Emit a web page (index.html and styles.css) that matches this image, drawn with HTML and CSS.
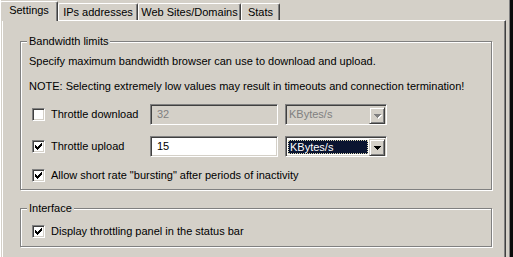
FILE: index.html
```html
<!DOCTYPE html>
<html>
<head>
<meta charset="utf-8">
<link rel="stylesheet" href="styles.css">
</head>
<body>
<div class="dialog">
  <div class="main">
    <div class="tabs">
      <div class="tab active tab-settings">Settings</div>
      <div class="tab tab-ips">IPs addresses</div>
      <div class="tab tab-web">Web Sites/Domains</div>
      <div class="tab tab-stats">Stats</div>
    </div>
    <div class="panel">
      <fieldset class="group">
        <legend>Bandwidth limits</legend>
        <div class="group-body group-body-bw">
          <p class="line">Specify maximum bandwidth browser can use to download and upload.</p>
          <p class="line line-note">NOTE: Selecting extremely low values may result in timeouts and connection termination!</p>
          <div class="row">
            <label class="check">
              <span class="box"></span>
              <span>Throttle download</span>
            </label>
            <div class="textbox disabled">32</div>
            <div class="select disabled">
              <div class="value">KBytes/s</div>
              <div class="drop"><svg width="7" height="4" viewBox="0 0 7 4" class="arrow-shadow"><path d="M0 0h7v1H0zM1 1h5v1H1zM2 2h3v1H2zM3 3h1v1H3z" fill="#fff"/></svg><svg width="7" height="4" viewBox="0 0 7 4" class="arrow"><path d="M0 0h7v1H0zM1 1h5v1H1zM2 2h3v1H2zM3 3h1v1H3z"/></svg></div>
            </div>
          </div>
          <div class="row">
            <label class="check">
              <span class="box"><svg width="7" height="7" viewBox="0 0 7 7"><path d="M0 2h1v3H0zM1 3h1v3H1zM2 4h1v3H2zM3 3h1v3H3zM4 2h1v3H4zM5 1h1v3H5zM6 0h1v3H6z"/></svg></span>
              <span>Throttle upload</span>
            </label>
            <div class="textbox">15</div>
            <div class="select focused">
              <div class="value"><span class="sel">KBytes/s</span></div>
              <div class="drop"><svg width="7" height="4" viewBox="0 0 7 4" class="arrow"><path d="M0 0h7v1H0zM1 1h5v1H1zM2 2h3v1H2zM3 3h1v1H3z"/></svg></div>
            </div>
          </div>
          <div class="row row-last">
            <label class="check">
              <span class="box"><svg width="7" height="7" viewBox="0 0 7 7"><path d="M0 2h1v3H0zM1 3h1v3H1zM2 4h1v3H2zM3 3h1v3H3zM4 2h1v3H4zM5 1h1v3H5zM6 0h1v3H6z"/></svg></span>
              <span>Allow short rate "bursting" after periods of inactivity</span>
            </label>
          </div>
        </div>
      </fieldset>
      <fieldset class="group group-iface">
        <legend>Interface</legend>
        <div class="group-body group-body-if">
          <div class="row row-first">
            <label class="check">
              <span class="box"><svg width="7" height="7" viewBox="0 0 7 7"><path d="M0 2h1v3H0zM1 3h1v3H1zM2 4h1v3H2zM3 3h1v3H3zM4 2h1v3H4zM5 1h1v3H5zM6 0h1v3H6z"/></svg></span>
              <span>Display throttling panel in the status bar</span>
            </label>
          </div>
        </div>
      </fieldset>
    </div>
  </div>
  <div class="edge">
    <span class="edge-gap"></span>
    <span class="edge-l1"></span>
    <span class="edge-l2"></span>
  </div>
</div>
</body>
</html>
```

FILE: styles.css
```css
html, body {
  margin: 0;
  padding: 0;
}
body {
  background: #d4d0c8;
  font-family: "Liberation Sans", Arial, sans-serif;
  font-size: 11px;
  line-height: 13px;
  color: #000;
}
.dialog {
  display: flex;
  width: 513px;
  height: 257px;
  overflow: hidden;
  box-sizing: border-box;
  border-left: 1px solid #fff;
}
.main {
  width: 505px;
  box-sizing: border-box;
  padding-left: 1px;
  display: flex;
  flex-direction: column;
  flex: none;
}
.tabs {
  display: flex;
  align-items: flex-end;
  height: 20px;
  flex: none;
  margin-left: -2px;
}
.tab {
  box-sizing: border-box;
  height: 17px;
  padding-top: 2px;
  border-top: 1px solid #fff;
  border-left: 1px solid #fff;
  border-right: 1px solid #404040;
  box-shadow: inset -1px 0 #808080;
  border-radius: 2px 2px 0 0;
  text-align: center;
  white-space: nowrap;
  background: #d4d0c8;
}
.tab.active {
  height: 20px;
  margin-bottom: -1px;
  position: relative;
  z-index: 1;
}
.tab-settings { width: 58px; }
.tab-ips { width: 80px; }
.tab-web { width: 103px; }
.tab-stats { width: 39px; }

.panel {
  flex: 1;
  border-top: 1px solid #fff;
  border-left: 1px solid #fff;
  border-right: 1px solid #404040;
  box-shadow: inset -1px 0 #808080;
  padding: 14px 0 0 17px;
}
.group {
  box-sizing: border-box;
  width: 472px;
  min-width: 0;
  margin: 0;
  padding: 0;
  border: 1px solid #808080;
  box-shadow: inset 1px 1px #fff, 1px 1px #fff;
}
.group legend {
  padding: 0 2px;
  margin-left: 6px;
  line-height: 13px;
  background: #d4d0c8;
}
.group-iface {
  margin-top: 12px;
}
.group-body-bw {
  padding: 7px 0 3px 8px;
}
.group-body-if {
  padding: 6px 0 4px 8px;
}
.line {
  margin: 0;
  white-space: nowrap;
}
.line-note {
  margin-top: 12px;
}
.row {
  display: flex;
  align-items: center;
  height: 21px;
  margin-top: 11px;
  padding-left: 3px;
}
.row-last {
  margin-top: 8px;
}
.row-first {
  margin-top: 0;
}
.check {
  display: flex;
  align-items: center;
  gap: 6px;
  width: 118px;
  flex: none;
  white-space: nowrap;
}
.box {
  box-sizing: border-box;
  width: 13px;
  height: 13px;
  flex: none;
  border: 1px solid;
  border-color: #808080 #fff #fff #808080;
  box-shadow: inset 1px 1px #404040, inset -1px -1px #d4d0c8;
  background: #fff;
  padding: 2px;
  display: flex;
}
.box svg {
  display: block;
  shape-rendering: crispEdges;
}
.textbox {
  box-sizing: border-box;
  width: 128px;
  height: 21px;
  flex: none;
  border: 1px solid;
  border-color: #808080 #fff #fff #808080;
  box-shadow: inset 1px 1px #404040, inset -1px -1px #d4d0c8;
  background: #fff;
  padding: 3px 0 0 6px;
}
.textbox.disabled {
  background: #d4d0c8;
  color: #808080;
}
.select {
  box-sizing: border-box;
  width: 102px;
  height: 21px;
  flex: none;
  margin-left: 7px;
  border: 1px solid;
  border-color: #808080 #fff #fff #808080;
  box-shadow: inset 1px 1px #404040, inset -1px -1px #d4d0c8;
  background: #fff;
  padding: 2px 1px 1px 2px;
  display: flex;
}
.select.disabled {
  background: #d4d0c8;
  color: #808080;
}
.value {
  flex: 1;
  display: flex;
  padding-top: 1px;
  padding-left: 1px;
}
.select.focused .value {
  padding: 1px 1px 1px 0;
}
.sel {
  flex: 1;
  background: #0a1430;
  color: #fff;
  border: 1px dotted #d8d4b0;
  padding-left: 1px;
  line-height: 13px;
}
.drop {
  box-sizing: border-box;
  width: 16px;
  height: 17px;
  flex: none;
  border: 1px solid;
  border-color: #d4d0c8 #404040 #404040 #d4d0c8;
  box-shadow: inset 1px 1px #fff, inset -1px -1px #808080;
  background: #d4d0c8;
  display: grid;
  place-items: center;
}
.drop svg {
  display: block;
  grid-area: 1 / 1;
  shape-rendering: crispEdges;
}
.select.disabled .arrow {
  fill: #808080;
}
.arrow-shadow {
  margin: 2px 0 0 2px;
}
.edge {
  display: flex;
  width: 7px;
  flex: none;
}
.edge-gap {
  width: 3px;
}
.edge-l1 {
  width: 1px;
  background: #808080;
}
.edge-l2 {
  width: 3px;
  background: #0a0a0a;
}
```
